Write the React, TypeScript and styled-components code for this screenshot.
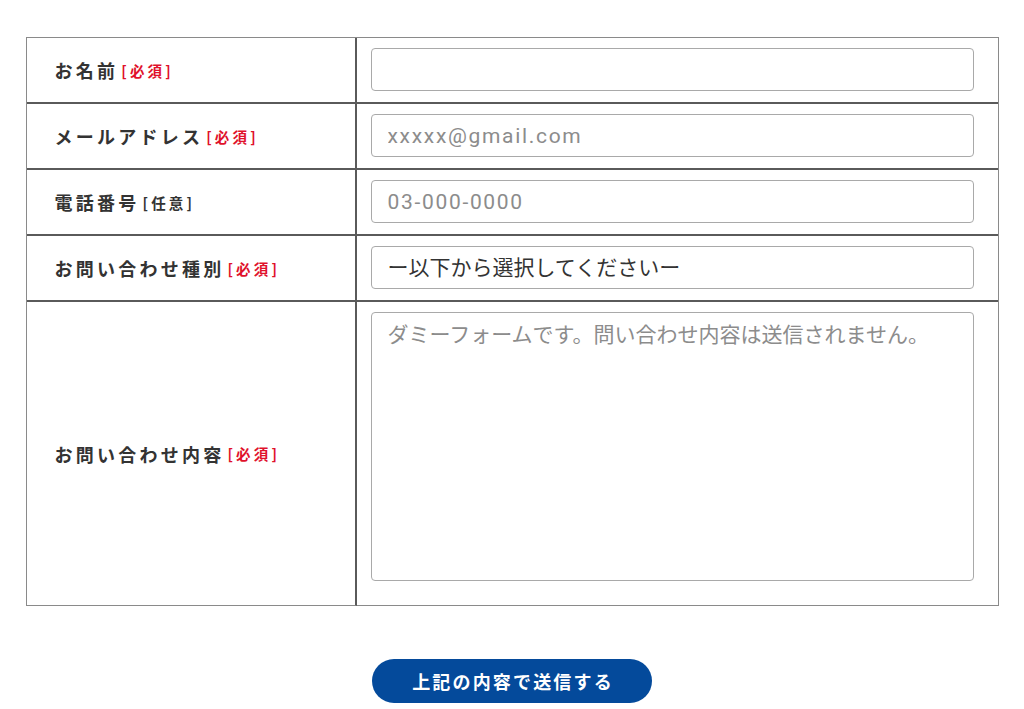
import React from "react";
import styled, { createGlobalStyle } from "styled-components";

const GlobalStyle = createGlobalStyle`
  html, body {
    margin: 0;
    padding: 0;
    background: #ffffff;
  }
  body {
    font-family: "Noto Sans CJK JP", "Noto Sans", sans-serif;
    color: #333333;
  }
  * { box-sizing: border-box; }
`;

const Page = styled.div`
  width: 1024px;
  padding-top: 37px;
  display: flex;
  flex-direction: column;
  align-items: center;
`;

const Table = styled.div`
  width: 973px;
  display: grid;
  grid-template-columns: 330px 1fr;
  border: 1px solid #8a8a8a;
  border-bottom: none;
`;

const LabelCell = styled.div<{ $last?: boolean }>`
  display: flex;
  align-items: center;
  padding-left: 28px;
  border-right: 2px solid #5a5a5a;
  border-bottom: ${(p) => (p.$last ? "1px solid #8a8a8a" : "2px solid #5a5a5a")};
`;

const FieldCell = styled.div<{ $last?: boolean }>`
  padding: 10px 24px ${(p) => (p.$last ? "24px" : "11px")} 14px;
  border-bottom: ${(p) => (p.$last ? "1px solid #8a8a8a" : "2px solid #5a5a5a")};
`;

const LabelText = styled.span`
  font-family: "Noto Sans CJK JP", sans-serif;
  font-weight: 700;
  font-size: 18px;
  letter-spacing: 0.18em;
  color: #333333;
`;

const Tag = styled.span<{ $required?: boolean }>`
  font-family: "Noto Sans CJK JP", sans-serif;
  font-weight: 700;
  font-size: 14.5px;
  letter-spacing: 0.22em;
  margin-left: 3px;
  color: ${(p) => (p.$required ? "#e0112b" : "#333333")};
`;

const fieldBase = `
  width: 100%;
  border: 1px solid #a9a9a9;
  border-radius: 4px;
  background: #ffffff;
  font-family: Roboto, "Noto Sans CJK JP", sans-serif;
  font-size: 21px;
  color: #333333;
  padding: 0 16px;
  outline: none;
  margin: 0;
  display: block;
`;

const Input = styled.input`
  ${fieldBase}
  height: 43px;
  letter-spacing: 0.08em;
  &::placeholder {
    color: #8c8c8c;
  }
`;

const Select = styled.select`
  ${fieldBase}
  height: 43px;
  appearance: none;
  -webkit-appearance: none;
`;

const TextArea = styled.textarea`
  ${fieldBase}
  height: 269px;
  padding: 7px 16px;
  resize: none;
  line-height: 1.5;
  &::placeholder {
    color: #8c8c8c;
  }
`;

const SubmitButton = styled.button`
  margin-top: 53px;
  width: 280px;
  height: 44px;
  border: none;
  border-radius: 22px;
  background: #044a9b;
  color: #ffffff;
  font-family: "Noto Sans CJK JP", sans-serif;
  font-weight: 700;
  font-size: 18px;
  letter-spacing: 0.12em;
  padding: 0 0 0 2px;
  cursor: pointer;
`;

type Row = {
  label: string;
  required: boolean;
  kind: "input" | "select" | "textarea";
  placeholder?: string;
};

const rows: Row[] = [
  { label: "お名前", required: true, kind: "input" },
  { label: "メールアドレス", required: true, kind: "input", placeholder: "xxxxx@gmail.com" },
  { label: "電話番号", required: false, kind: "input", placeholder: "03-000-0000" },
  { label: "お問い合わせ種別", required: true, kind: "select" },
  {
    label: "お問い合わせ内容",
    required: true,
    kind: "textarea",
    placeholder: "ダミーフォームです。問い合わせ内容は送信されません。",
  },
];

export default function App() {
  return (
    <>
      <GlobalStyle />
      <Page>
        <Table>
          {rows.map((r, i) => {
            const last = i === rows.length - 1;
            return (
              <React.Fragment key={r.label}>
                <LabelCell $last={last}>
                  <LabelText>{r.label}</LabelText>
                  <Tag $required={r.required}>{r.required ? "[必須]" : "[任意]"}</Tag>
                </LabelCell>
                <FieldCell $last={last}>
                  {r.kind === "input" && <Input type="text" placeholder={r.placeholder} />}
                  {r.kind === "select" && (
                    <Select defaultValue="">
                      <option value="">ー以下から選択してくださいー</option>
                    </Select>
                  )}
                  {r.kind === "textarea" && <TextArea placeholder={r.placeholder} />}
                </FieldCell>
              </React.Fragment>
            );
          })}
        </Table>
        <SubmitButton type="button">上記の内容で送信する</SubmitButton>
      </Page>
    </>
  );
}
